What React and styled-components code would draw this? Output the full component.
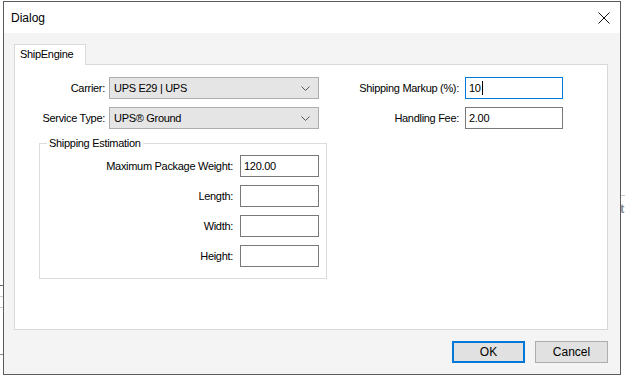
import styled, { createGlobalStyle } from "styled-components";

const GlobalStyle = createGlobalStyle`
  html, body {
    margin: 0;
    padding: 0;
    background: #ffffff;
  }
  * {
    box-sizing: border-box;
  }
`;

const Desktop = styled.div`
  position: relative;
  width: 625px;
  height: 376px;
  overflow: hidden;
  padding: 1px 0 0 3px;
  font-family: "Liberation Sans", Arial, sans-serif;
  font-size: 11px;
  letter-spacing: -0.3px;
  color: #000;
`;

// bits of the window lying behind the dialog
const BackLine = styled.div`
  position: absolute;
  height: 1px;
  background: ${(p) => p.color || "#c8c8c8"};
  top: ${(p) => p.top}px;
  left: ${(p) => p.left}px;
  width: ${(p) => p.width}px;
`;

const BackGlyph = styled.span`
  position: absolute;
  top: 201px;
  left: 620px;
  font-size: 13px;
  font-weight: bold;
  color: #8a8f96;
`;

const Window = styled.div`
  position: relative;
  z-index: 1;
  width: 618px;
  height: 374px;
  border: 1px solid #5c5c5c;
  background: #f4f4f4;
  display: flex;
  flex-direction: column;
`;

const TitleBar = styled.div`
  height: 31px;
  background: #fff;
  display: flex;
  align-items: center;
  justify-content: space-between;
  padding: 0 10px 0 7px;
  flex-shrink: 0;
  h1 {
    margin: 0;
    font-size: 12px;
    font-weight: normal;
    letter-spacing: 0;
  }
`;

const CloseIcon = () => (
  <svg width="12" height="12" viewBox="0 0 12 12">
    <path d="M0.5 0.5 L11.5 11.5 M11.5 0.5 L0.5 11.5" stroke="#111" strokeWidth="1" />
  </svg>
);

const Body = styled.div`
  flex: 1;
  display: flex;
  flex-direction: column;
  padding: 11px 12px 11px 10px;
`;

const TabStrip = styled.div`
  display: flex;
`;

const Tab = styled.div`
  position: relative;
  z-index: 1;
  width: 72px;
  height: 21px;
  margin-bottom: -1px;
  padding: 3px 0 0 5px;
  background: #fff;
  border: 1px solid #d9d9d9;
  border-bottom: none;
`;

const Panel = styled.div`
  height: 266px;
  background: #fff;
  border: 1px solid #d9d9d9;
  padding: 12px 44px 0 0;
  display: flex;
  justify-content: space-between;
  align-items: flex-start;
`;

const LeftColumn = styled.div`
  display: flex;
  flex-direction: column;
`;

const FormGrid = styled.div`
  display: grid;
  grid-template-columns: ${(p) => p.$cols};
  column-gap: ${(p) => p.$gap}px;
  row-gap: 8px;
  align-items: center;
`;

const Label = styled.label`
  text-align: right;
  white-space: nowrap;
`;

const Combo = styled.div`
  height: 22px;
  background: #e5e5e5;
  border: 1px solid #adadad;
  display: flex;
  align-items: center;
  justify-content: space-between;
  padding: 0 8px 0 4px;
`;

const Chevron = () => (
  <svg width="9" height="5" viewBox="0 0 9 5">
    <polyline points="0.5,0.5 4.5,4.5 8.5,0.5" fill="none" stroke="#555" strokeWidth="1" />
  </svg>
);

const Field = styled.div`
  height: 22px;
  background: #fff;
  border: 1px solid ${(p) => (p.$focused ? "#0078d7" : "#7a7a7a")};
  display: flex;
  align-items: center;
  padding: 0 3px;
`;

const Caret = styled.span`
  display: inline-block;
  width: 1px;
  height: 14px;
  margin-left: 1px;
  background: #000;
`;

const GroupBox = styled.fieldset`
  width: 288px;
  margin: 8px 0 0 24px;
  padding: 5px 7px 11px 0;
  border: 1px solid #dcdcdc;
  legend {
    margin-left: 7px;
    padding: 0 2px;
    line-height: 13px;
  }
`;

const RightColumn = styled.div``;

const ButtonRow = styled.div`
  display: flex;
  justify-content: flex-end;
  gap: 10px;
  margin-top: 11px;
`;

const Button = styled.button`
  width: 73px;
  height: 22px;
  margin: 0;
  padding: 0;
  font: inherit;
  letter-spacing: 0;
  font-size: 12px;
  color: #000;
  background: #e1e1e1;
  border: ${(p) => (p.$default ? "2px solid #0078d7" : "1px solid #adadad")};
`;

export default function App() {
  return (
    <>
      <GlobalStyle />
      <Desktop>
        <BackLine top={285} left={0} width={3} color="#6e6e6e" />
        <BackLine top={296} left={0} width={3} />
        <BackLine top={307} left={0} width={3} />
        <BackLine top={354} left={0} width={3} color="#8a8a8a" />
        <BackLine top={195} left={621} width={4} />
        <BackGlyph>t</BackGlyph>
        <Window>
          <TitleBar>
            <h1>Dialog</h1>
            <CloseIcon />
          </TitleBar>
          <Body>
            <TabStrip>
              <Tab>ShipEngine</Tab>
            </TabStrip>
            <Panel>
              <LeftColumn>
                <FormGrid $cols="90px 210px" $gap={4}>
                  <Label>Carrier:</Label>
                  <Combo>
                    <span>UPS E29 | UPS</span>
                    <Chevron />
                  </Combo>
                  <Label>Service Type:</Label>
                  <Combo>
                    <span>UPS® Ground</span>
                    <Chevron />
                  </Combo>
                </FormGrid>
                <GroupBox>
                  <legend>Shipping Estimation</legend>
                  <FormGrid $cols="1fr 79px" $gap={7}>
                    <Label>Maximum Package Weight:</Label>
                    <Field>120.00</Field>
                    <Label>Length:</Label>
                    <Field />
                    <Label>Width:</Label>
                    <Field />
                    <Label>Height:</Label>
                    <Field />
                  </FormGrid>
                </GroupBox>
              </LeftColumn>
              <RightColumn>
                <FormGrid $cols="130px 98px" $gap={6}>
                  <Label>Shipping Markup (%):</Label>
                  <Field $focused>
                    10
                    <Caret />
                  </Field>
                  <Label>Handling Fee:</Label>
                  <Field>2.00</Field>
                </FormGrid>
              </RightColumn>
            </Panel>
            <ButtonRow>
              <Button $default>OK</Button>
              <Button>Cancel</Button>
            </ButtonRow>
          </Body>
        </Window>
      </Desktop>
    </>
  );
}
